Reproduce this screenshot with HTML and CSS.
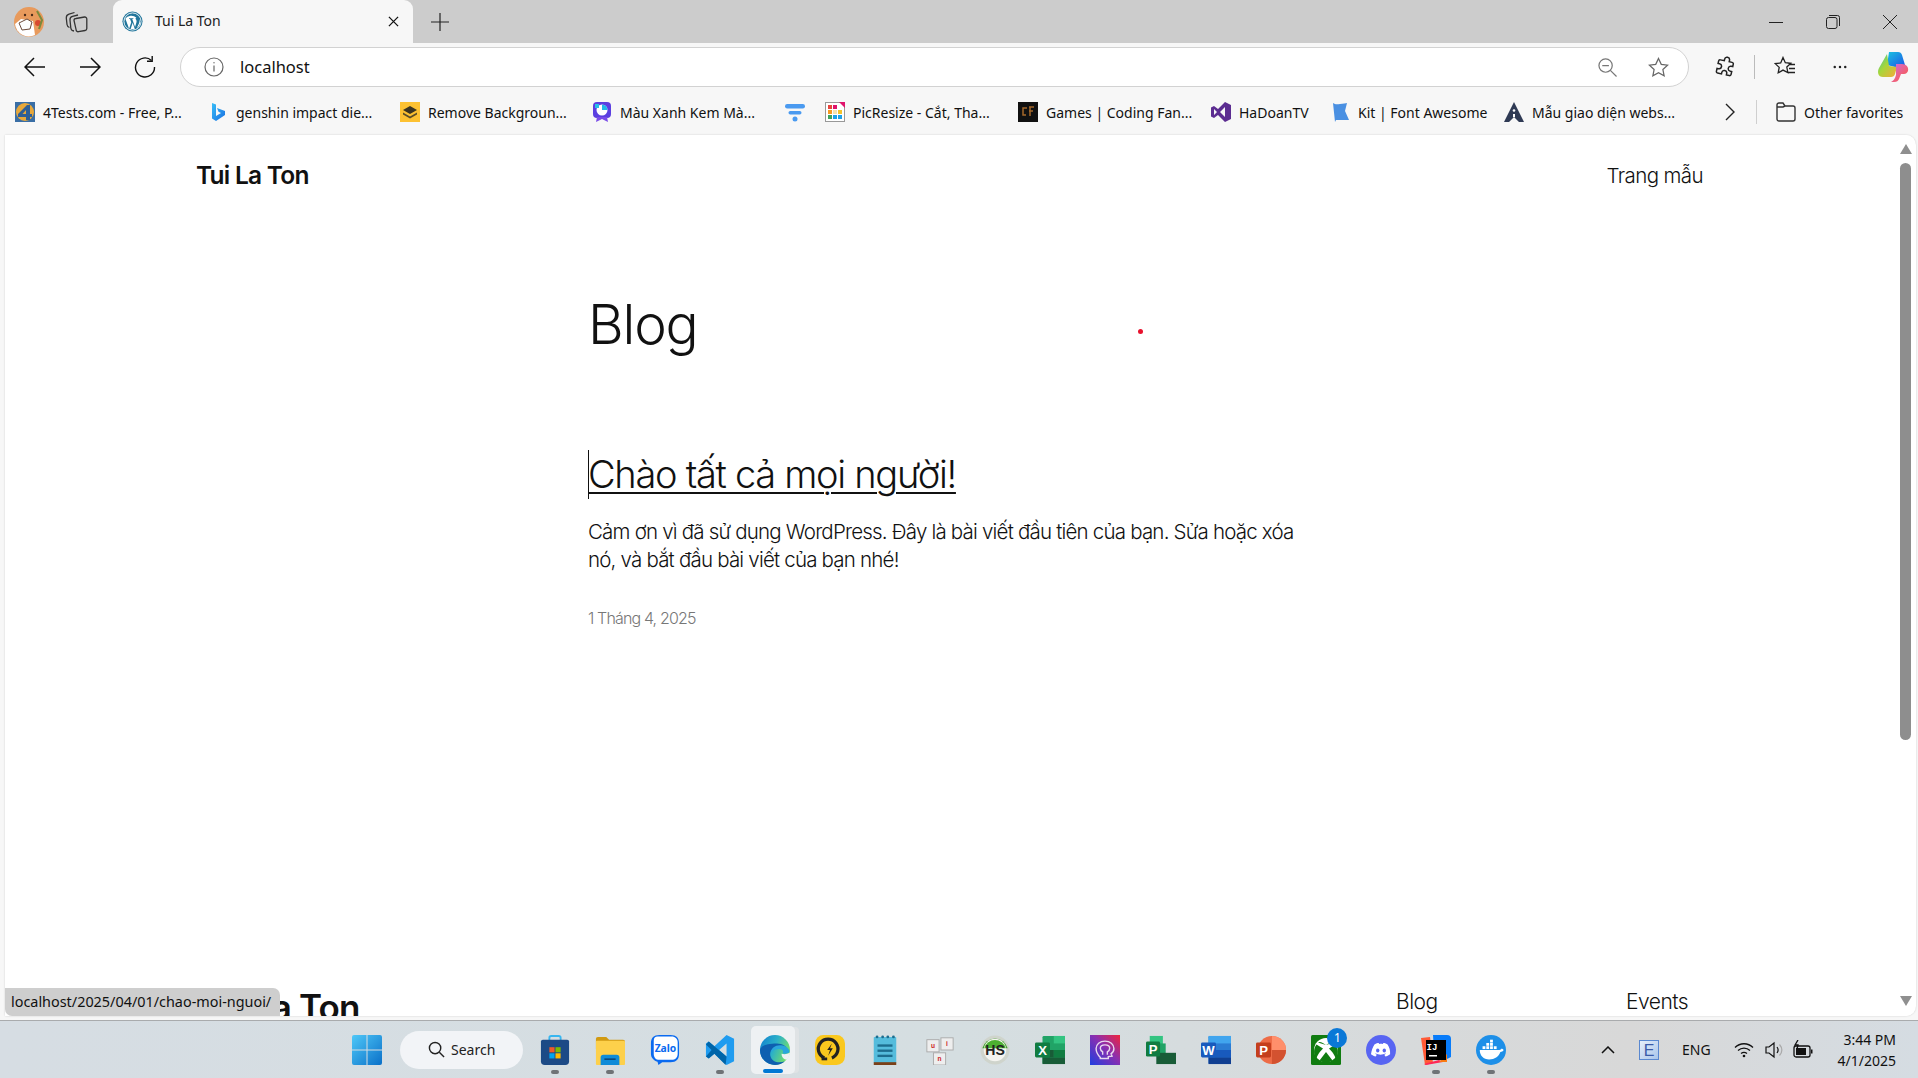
FILE: index.html
```html
<!DOCTYPE html>
<html lang="vi">
<head>
<meta charset="utf-8">
<title>Tui La Ton</title>
<link rel="stylesheet" href="styles.css">
</head>
<body>
<div class="tabstrip">
  <svg class="avatar" viewBox="0 0 32 32"><circle cx="16" cy="16" r="15" fill="#e89a5c"/><path d="M2 18a14 14 0 0 0 20 11l-2-14-12-2z" fill="#fff"/><path d="M6 17l8-4 5 3-2 7-8 1z" fill="#fdfdfd" stroke="#6b4a3a"/><circle cx="12" cy="9" r="1.2" fill="#4a2c1a"/><circle cx="19" cy="9" r="1.2" fill="#4a2c1a"/><circle cx="25" cy="17" r="3" fill="#d8492f"/><path d="M24 5l5 9-3 9" fill="none" stroke="#7a8a3c" stroke-width="2"/></svg>
  <svg class="tabs-icon" viewBox="0 0 24 24" fill="none" stroke="#333" stroke-width="1.300"><path d="M11 8.500l8.500-1.500a2 2 0 0 1 2.300 2v9.500a2 2 0 0 1-1.700 2l-6.600 1.200a2 2 0 0 1-2.400-2L9 10.500a2 2 0 0 1 2-2z"/><path d="M9 21c-2-.3-3-1.300-3.200-3L5 10c-.2-2 .7-3.200 2.500-3.700L13 5"/><path d="M4.500 17.500C3 17 2.200 16 2 14.500L1.300 8C1.200 6 2 4.800 4 4.200L9.500 2.500"/></svg>
  <div class="tab">
    <svg class="wp" viewBox="0 0 24 24"><circle cx="12" cy="12" r="11.500" fill="#21759b"/><circle cx="12" cy="12" r="9.800" fill="none" stroke="#fff" stroke-width="1"/><path d="M3.800 8.500l4.300 11.700 2.500-7.300-1.400-3.800-1.200-.1V8.300h5v.7l-1.300.1 3.200 9.300 1.500-5c.6-2 .2-3.100-.8-4.400-.3-.6.100-1.400 1-1.400a9 9 0 0 0-13.200 1.400z" fill="#fff"/><path d="M12.200 13.500l-2.300 7 4.700.1zM19.800 8.500c.6 2.300.2 4.200-.7 6.300l-2.300 5a9.500 9.500 0 0 0 3-11.300z" fill="#fff"/></svg>
    <span class="tab-title">Tui La Ton</span>
    <svg class="tab-x" viewBox="0 0 12 12" stroke="#111" stroke-width="1.400"><path d="M1 1l10 10M11 1L1 11"/></svg>
  </div>
  <svg class="plus" viewBox="0 0 18 18" stroke="#222" stroke-width="1.200"><path d="M9 0v18M0 9h18"/></svg>
  <div class="win-controls">
    <svg viewBox="0 0 14 14" stroke="#222" stroke-width="1"><path d="M0 7.500h14"/></svg>
    <svg viewBox="0 0 14 14" fill="none" stroke="#222" stroke-width="1"><rect x=".5" y="2.500" width="10.500" height="11" rx="2"/><path d="M3 .5h8.500a2 2 0 0 1 2 2V11"/></svg>
    <svg viewBox="0 0 14 14" stroke="#222" stroke-width="1"><path d="M0 0l14 14M14 0L0 14"/></svg>
  </div>
</div>

<div class="toolbar">
  <svg class="nav" viewBox="0 0 22 22" fill="none" stroke="#111" stroke-width="1.500"><path d="M21 11H1M10 2l-9 9 9 9"/></svg>
  <svg class="nav" viewBox="0 0 22 22" fill="none" stroke="#111" stroke-width="1.500"><path d="M1 11h20M12 2l9 9-9 9"/></svg>
  <svg class="nav reload" viewBox="0 0 22 22" fill="none" stroke="#111" stroke-width="1.400"><path d="M17.500 4.500A9.500 9.500 0 1 0 20.500 11"/><path d="M18.200 0v5.200H13"/></svg>
  <div class="address">
    <svg class="info" viewBox="0 0 20 20" fill="none" stroke="#666" stroke-width="1.200"><circle cx="10" cy="10" r="9"/><path d="M10 8.500v6"/><circle cx="10" cy="5.700" r=".7" fill="#666" stroke="none"/></svg>
    <span class="url">localhost</span>
    <svg class="addr-zoom" viewBox="0 0 20 20" fill="none" stroke="#777" stroke-width="1.300"><circle cx="8" cy="8" r="7"/><path d="M13 13l6.500 6.500M4.500 8h7"/></svg>
    <svg class="addr-star" viewBox="0 0 22 22" fill="none" stroke="#666" stroke-width="1.300"><path d="M11 1.500l2.900 6.200 6.600.8-4.900 4.600 1.300 6.700L11 16.500l-5.900 3.300 1.300-6.700L1.500 8.500l6.600-.8z"/></svg>
  </div>
  <svg class="tool ext" viewBox="0 0 22 22" fill="none" stroke="#222" stroke-width="1.500"><path d="M9 3.500a2.500 2.500 0 0 1 5 0V5h3a1.500 1.500 0 0 1 1.500 1.500V9H17a2.500 2.500 0 0 0 0 5h1.500v3a1.500 1.500 0 0 1-1.500 1.500h-3V17a2.500 2.500 0 0 0-5 0v1.500H5A1.500 1.500 0 0 1 3.500 17v-3H5a2.500 2.500 0 0 0 0-5H3.500V6.500A1.500 1.500 0 0 1 5 5h4z" transform="rotate(12 11 11)"/></svg>
  <span class="tool-sep"></span>
  <svg class="tool fav" viewBox="0 0 22 22" fill="none" stroke="#222" stroke-width="1.300"><path d="M9 1.500l2.300 5.200 5.500.6-4 3.800 1 5.400L9 14.100l-4.800 2.700 1-5.400-4-3.800 5.500-.6zM14.500 8.500h6.500M15 12.500h6M14 16.500h7"/></svg>
  <svg class="tool dots" viewBox="0 0 16 4" fill="#222"><circle cx="2" cy="2" r="1.400"/><circle cx="8" cy="2" r="1.400"/><circle cx="14" cy="2" r="1.400"/></svg>
  <svg class="copilot" viewBox="0 0 32 32">
    <defs>
      <linearGradient id="cp1" x1="0" y1="0" x2="1" y2="1"><stop offset="0" stop-color="#19c3e0"/><stop offset="1" stop-color="#1c55e8"/></linearGradient>
      <linearGradient id="cp2" x1="0" y1="0" x2="1" y2="1"><stop offset="0" stop-color="#3cc8a0"/><stop offset=".45" stop-color="#a8d63a"/><stop offset="1" stop-color="#f7a93a"/></linearGradient>
      <linearGradient id="cp3" x1="0" y1="0" x2="1" y2="1"><stop offset="0" stop-color="#c96be8"/><stop offset=".6" stop-color="#f0607a"/><stop offset="1" stop-color="#f44a3a"/></linearGradient>
    </defs>
    <path d="M12 1h9c2 0 3.500 1 4 3l3 10-10 2-8-2z" fill="url(#cp1)"/>
    <path d="M10 3L2 17c-2 4-1 9 4 9h8c2 0 3.500-1 4-3l2-7-8-1z" fill="url(#cp2)"/>
    <path d="M19 13h6c4 0 7 3 6 7-1 2-2 3-4 3h-3l-2 5c-1 2-2 3-5 3h-3c2-1 4-3 5-7z" fill="url(#cp3)"/>
  </svg>
</div>

<div class="bookmarks">
  <div class="bm"><svg class="bi" viewBox="0 0 20 20"><rect width="20" height="20" fill="#3a6ea5"/><circle cx="10" cy="10" r="9" fill="#e8a83a"/><path d="M12 3h3v9h2v3h-2v3h-4v-3H3v-3zM11 12V8l-3.500 4z" fill="#2f5f96"/></svg><span>4Tests.com - Free, P...</span></div>
  <div class="bm"><svg class="bi" viewBox="0 0 20 20"><defs><linearGradient id="bg" x1="0" y1="0" x2="1" y2="1"><stop offset="0" stop-color="#37bdf8"/><stop offset="1" stop-color="#1a6fe0"/></linearGradient></defs><path d="M4 1l4 1.500v11.500l5-3-2.500-1.200-1.500-3.800 8 3v4l-9 6-4-2.500z" fill="url(#bg)"/></svg><span>genshin impact die...</span></div>
  <div class="bm"><svg class="bi" viewBox="0 0 20 20"><rect width="20" height="20" fill="#fdc131"/><path d="M10 4l7 4-7 4-7-4z" fill="#3a3320"/><path d="M3 10.500l7 4 7-4v2l-7 4-7-4z" fill="#5a4d28"/></svg><span>Remove Backgroun...</span></div>
  <div class="bm"><svg class="bi" viewBox="0 0 20 20"><rect x="1" y="0" width="18" height="16" rx="4" fill="#5b3fe0"/><path d="M5 15l-1 5 6-3 6 3-1-5z" fill="#7a4be8"/><circle cx="10" cy="8" r="5.500" fill="#fff"/><path d="M10 8V2.500A5.500 5.500 0 0 1 15.500 8z" fill="#22b8e8"/><rect x="3" y="2" width="4" height="4" fill="#25c0e8"/></svg><span>Màu Xanh Kem Mà...</span></div>
  <div class="bm"><svg class="bi" viewBox="0 0 20 20" fill="#4a9af0"><rect y="2" width="20" height="4.500" rx="2.200"/><rect x="3.500" y="9" width="13" height="3.500" rx="1.700"/><circle cx="10" cy="17" r="2.500"/></svg></div>
  <div class="bm"><svg class="bi" viewBox="0 0 20 20"><rect x=".5" y=".5" width="19" height="19" fill="#fff" stroke="#999"/><path d="M14 0h6v6z" fill="#e0136c"/><rect x="3" y="3" width="4" height="4" fill="#e8453c"/><rect x="8" y="3" width="4" height="4" fill="#e0136c"/><rect x="3" y="8" width="4" height="4" fill="#f59a23"/><rect x="8" y="8" width="4" height="4" fill="#f5e2b0"/><rect x="13" y="8" width="4" height="4" fill="#f2c32c"/><rect x="3" y="13" width="4" height="4" fill="#3da35a"/><rect x="8" y="13" width="4" height="4" fill="#1da1e8"/><rect x="13" y="13" width="4" height="4" fill="#1da1e8"/></svg><span>PicResize - Cắt, Tha...</span></div>
  <div class="bm"><svg class="bi" viewBox="0 0 20 20"><rect width="20" height="20" fill="#111"/><path d="M9 6H5v7h3M11 5h5M11 9h4M12 5v9" fill="none" stroke="#a5682a" stroke-width="1.500"/></svg><span>Games | Coding Fan...</span></div>
  <div class="bm"><svg class="bi" viewBox="0 0 20 20" fill="#5c2d91"><path d="M14 0l6 3v14l-6 3-7-7-4 3-3-1.500v-9L3 4l4 3zM3 7v6l3-3zm11-2L9 10l5 5z" fill-rule="evenodd"/></svg><span>HaDoanTV</span></div>
  <div class="bm"><svg class="bi flag" viewBox="0 0 16 20" fill="#4a90e2"><path d="M0 1c2 1.500 4 1.500 7 1s6-.5 7-1l-2 8 4 9H3l-1 2z"/></svg><span>Kit | Font Awesome</span></div>
  <div class="bm"><svg class="bi" viewBox="0 0 20 20" fill="#2f3a54"><path d="M10 0L0 20h5l5-5 5 5h5z"/><circle cx="10" cy="8.500" r="1.300" fill="#fff"/><path d="M9 12h2v3H9z" fill="#fff"/></svg><span>Mẫu giao diện webs...</span></div>
  <svg class="bm-more" viewBox="0 0 10 18" fill="none" stroke="#222" stroke-width="1.400"><path d="M1 1l8 8-8 8"/></svg>
  <span class="bm-sep"></span>
  <div class="bm other"><svg class="bi" viewBox="0 0 20 20" fill="none" stroke="#333" stroke-width="1.400"><path d="M1 5V3a2 2 0 0 1 2-2h4l2 3h8a2 2 0 0 1 2 2v11a2 2 0 0 1-2 2H3a2 2 0 0 1-2-2zM1 5h6l2-1"/></svg><span>Other favorites</span></div>
</div>

<main class="viewport">
  <div class="page">
    <header class="site-head">
      <span class="brand">Tui La Ton</span>
      <span class="nav-link">Trang mẫu</span>
    </header>
    <article class="content">
      <h1 class="blog-title">Blog</h1>
      <h2 class="post-title"><span class="caret"></span>Chào tất cả mọi người!</h2>
      <p class="excerpt">Cảm ơn vì đã sử dụng WordPress. Đây là bài viết đầu tiên của bạn. Sửa hoặc xóa nó, và bắt đầu bài viết của bạn nhé!</p>
      <p class="date">1 Tháng 4, 2025</p>
    </article>
    <footer class="site-foot">
      <span class="foot-brand">Tui La Ton</span>
      <span class="foot-link first">Blog</span>
      <span class="foot-link">Events</span>
    </footer>
  </div>
  <div class="scrollbar">
    <span class="arrow up"></span>
    <span class="thumb"></span>
    <span class="arrow down"></span>
  </div>
  <span class="red-dot"></span>
  <div class="status">localhost/2025/04/01/chao-moi-nguoi/</div>
</main>

<div class="taskbar">
  <div class="apps">
    <svg class="winlogo" viewBox="0 0 30 30"><defs><linearGradient id="wl" x1="0" y1="0" x2="1" y2="1"><stop offset="0" stop-color="#4fc8f8"/><stop offset="1" stop-color="#0a70c8"/></linearGradient></defs><path d="M0 2a2 2 0 0 1 2-2h12.500v14.500H0zM15.500 0H28a2 2 0 0 1 2 2v12.500H15.500zM0 15.500h14.500V30H2a2 2 0 0 1-2-2zM15.500 15.500H30V28a2 2 0 0 1-2 2H15.500z" fill="url(#wl)"/></svg>
    <div class="search"><svg viewBox="0 0 18 18" fill="none" stroke="#222" stroke-width="1.500"><circle cx="7.500" cy="7.500" r="6"/><path d="M12 12l5 5"/></svg><span>Search</span></div>
    <div class="app run"><svg viewBox="0 0 30 32"><path d="M9 6V3a2 2 0 0 1 2-2h8a2 2 0 0 1 2 2v3" fill="none" stroke="#38b6f0" stroke-width="2"/><path d="M0 7a2 2 0 0 1 2-2h26a2 2 0 0 1 2 2v21a4 4 0 0 1-4 4H4a4 4 0 0 1-4-4z" fill="#1c4a86"/><rect x="9" y="13" width="5.500" height="5.500" fill="#f05a28"/><rect x="15.500" y="13" width="5.500" height="5.500" fill="#7fba00"/><rect x="9" y="19.500" width="5.500" height="5.500" fill="#00a4ef"/><rect x="15.500" y="19.500" width="5.500" height="5.500" fill="#ffb900"/></svg></div>
    <div class="app run"><svg viewBox="0 0 32 32"><path d="M1 4a2 2 0 0 1 2-2h9l3 3h15a2 2 0 0 1 2 2v8H1z" fill="#d19a12"/><rect x="1" y="6" width="31" height="26" rx="1" fill="#fdd04b"/><path d="M6 24a3 3 0 0 1 3-3h14a3 3 0 0 1 3 3v8H6z" fill="#0e8bd8"/><rect x="10" y="25" width="12" height="1.500" fill="#083e6e"/></svg></div>
    <div class="app"><svg viewBox="0 0 30 32"><path d="M9 0h12c6 0 9 3 9 9v11c0 6-3 9-9 9h-9l-4 3-1-3.500C2.500 27 0 24 0 20V9c0-6 3-9 9-9z" fill="#0a6af0"/><path d="M7 1.500h15c4 0 6.500 2.500 6.500 6.500v12c0 4-2.500 6.500-6.500 6.500H9C5 26.500 3 24 3 20V6c0-3 1.500-4.500 4-4.500z" fill="#fff"/><text x="15.500" y="18" class="zalo">Zalo</text></svg></div>
    <div class="app run"><svg viewBox="0 0 32 32"><path d="M23 0l8 4v24l-8 4-13-12-6 5-3-2V9l3-2 6 5zM23 9l-8 7 8 7z" fill="#1f9cf0" fill-rule="evenodd"/><path d="M1 10l3-3 19 16-1 9L10 20l-6 5-3-2 6-7z" fill="#0065a9"/></svg></div>
    <div class="app active"><svg viewBox="0 0 32 32"><defs><linearGradient id="eg" x1="0" y1="0" x2="1" y2=".4"><stop offset="0" stop-color="#0f7fd0"/><stop offset=".55" stop-color="#2bb0c8"/><stop offset="1" stop-color="#6fdc70"/></linearGradient></defs><circle cx="16" cy="16" r="16" fill="url(#eg)"/><path d="M0 16c0 9 7 16 16 16 4 0 8-1.500 10.500-4-7 2.500-14 .5-15.500-6-1-5 3-10 9-10 4 0 7 1.500 9 3-1-3-5-6-11-6C8 9 1 11 0 16z" fill="#0e5fb0"/><path d="M12 19c0-5 4-8 9-8 5 0 9 2 10.500 6 0 2.500-2.500 3-6 3-1.500 0-2-.5-1-1.500.5-1.500-1-3.500-4-3.500-3 0-7 1-8.500 4z" fill="#2aa6dc"/><path d="M23 20c3 1 6 .5 9-1-.5 3-1.500 5-3 7-3 1-6-2-6-6z" fill="#eef1f3"/></svg></div>
    <div class="app"><svg viewBox="0 0 32 32"><rect width="32" height="32" rx="9" fill="#fac81e"/><path d="M10 24.500a10.500 10.500 0 1 1 8 0" fill="none" stroke="#222" stroke-width="3.500"/><path d="M7 25.500h6" stroke="#222" stroke-width="3"/><path d="M18 9l-5 7h3l-2 6 5-8h-3z" fill="#222"/></svg></div>
    <div class="app"><svg viewBox="0 0 24 32"><rect x="0" y="2" width="24" height="28" rx="1" fill="#55bcdc"/><rect y="29" width="24" height="3" fill="#7a4018"/><g fill="#1d6d8e"><circle cx="3.500" cy="2" r="1.500"/><circle cx="9.500" cy="2" r="1.500"/><circle cx="15" cy="2" r="1.500"/><circle cx="21" cy="2" r="1.500"/><rect x="4" y="10" width="16" height="2.500"/><rect x="4" y="15.500" width="16" height="2.500"/><rect x="4" y="21" width="16" height="2.500"/></g></svg></div>
    <div class="app"><svg viewBox="0 0 32 32" font-size="7" class="uni"><rect x="2" y="5" width="13" height="13" fill="#eee" stroke="#aaa"/><rect x="17" y="3" width="13" height="13" fill="#eee" stroke="#aaa"/><rect x="9" y="19" width="13" height="13" fill="#eee" stroke="#aaa"/><text x="8.500" y="14" fill="#c22">u</text><text x="23.500" y="12" fill="#c22">i</text><text x="15.500" y="28" fill="#c22">n</text></svg></div>
    <div class="app"><svg viewBox="0 0 32 32"><circle cx="16" cy="16" r="15.500" fill="#cfd4cc"/><path d="M2.500 14a14 14 0 0 1 27 0z" fill="#3fa028"/><circle cx="16" cy="16" r="12" fill="#f4f4f0"/><path d="M4.500 14a12 12 0 0 1 23 0z" fill="#4cb030"/><text x="16" y="21.500" class="hs">HS</text></svg></div>
    <div class="app"><svg viewBox="0 0 32 32"><rect x="8" y="1" width="24" height="30" rx="1.500" fill="#21a366"/><rect x="20" y="1" width="12" height="8" fill="#33c481"/><rect x="20" y="16" width="12" height="8" fill="#107c41"/><rect x="8" y="16" width="12" height="8" fill="#185c37"/><rect x="8" y="24" width="24" height="7" fill="#185c37"/><rect x="0" y="8" width="16" height="16" rx="1.500" fill="#107c41"/><text x="8" y="21" class="office">X</text></svg></div>
    <div class="app"><svg viewBox="0 0 32 32"><defs><linearGradient id="ar" x1="0" y1="1" x2="1" y2="0"><stop offset="0" stop-color="#1f3ee0"/><stop offset=".55" stop-color="#8a2fb0"/><stop offset="1" stop-color="#f0243c"/></linearGradient></defs><rect width="32" height="32" fill="url(#ar)"/><path d="M11 24c-3-3-4.500-6-4.500-9.500C6.500 10 10.500 6.500 16 6.500s9.500 3.500 9.500 8c0 3-1 4.500-3 5.500l1 2.500-4 .5v2H11z" fill="none" stroke="#e8d8ee" stroke-width="1.500"/><path d="M13.500 21v-3c-2-1.500-2.500-3-2.500-4 0-2 2-3.500 5-3.500s5 1.500 5 3.500c0 1.500-1 3-2.500 4v3" fill="none" stroke="#e8d8ee" stroke-width="1.500"/></svg></div>
    <div class="app"><svg viewBox="0 0 32 32"><rect x="4" y="1" width="14" height="14" fill="#33c481"/><rect x="11" y="9" width="10" height="12" fill="#21a366"/><rect x="11" y="19" width="21" height="12" fill="#185c37"/><rect x="0" y="7" width="15" height="16" rx="1.500" fill="#107c41"/><text x="7.500" y="20" class="office">P</text></svg></div>
    <div class="app"><svg viewBox="0 0 32 32"><rect x="8" y="1" width="24" height="30" rx="1.500" fill="#2b7cd3"/><rect x="8" y="1" width="24" height="8" fill="#41a5ee"/><rect x="8" y="16" width="24" height="8" fill="#185abd"/><rect x="8" y="24" width="24" height="7" fill="#103f91"/><rect x="0" y="8" width="16" height="16" rx="1.500" fill="#185abd"/><text x="8" y="21" class="office">W</text></svg></div>
    <div class="app"><svg viewBox="0 0 32 32"><circle cx="17" cy="16" r="15" fill="#ed6c47"/><path d="M17 1a15 15 0 0 1 15 15H17z" fill="#ff8f6b"/><path d="M17 16h15a15 15 0 0 1-15 15z" fill="#d35230"/><rect x="0" y="8" width="16" height="16" rx="1.500" fill="#c43e1c"/><text x="8" y="21" class="office">P</text></svg></div>
    <div class="app badge-host"><svg viewBox="0 0 30 30"><rect width="30" height="30" rx="1.500" fill="#107c10"/><circle cx="15" cy="15" r="12" fill="#fff"/><path d="M15 10C13 8.500 10.500 7 8.500 7c-.5 0-1 .2-1.500.5zM5.500 9.500C2 14 2.500 20 5.500 24c0-3 3.500-7.500 6.500-10.500zM24.500 9.500C28 14 27.500 20 24.500 24c0-3-3.500-7.500-6.500-10.500zM15 17l-6.500 8.500c3.500 2.500 9.500 2.500 13 0z" fill="#107c10"/><path d="M15 10c2-1.500 4.500-3 6.500-3 .5 0 1 .2 1.500.5z" fill="#107c10"/></svg><span class="badge">1</span></div>
    <div class="app"><svg viewBox="0 0 32 32"><circle cx="16" cy="16" r="16" fill="#5865f2"/><path d="M9 10c2-1 3.500-1.300 4.500-1.400l.5 1c1.300-.2 2.700-.2 4 0l.5-1c1 .1 2.500.4 4.500 1.400 2 3 3 6.500 2.700 10.500-1.800 1.300-3.500 2-5 2.500l-1.200-2c.6-.2 1.200-.5 1.800-.9l-.4-.3c-3.500 1.600-7.300 1.600-10.800 0l-.4.3c.6.400 1.200.7 1.800.9l-1.200 2c-1.500-.5-3.200-1.200-5-2.500C6 16.500 7 13 9 10z" fill="#fff"/><ellipse cx="12.500" cy="16.500" rx="1.800" ry="2.100" fill="#5865f2"/><ellipse cx="19.500" cy="16.500" rx="1.800" ry="2.100" fill="#5865f2"/></svg></div>
    <div class="app run"><svg viewBox="0 0 30 30"><path d="M0 3l9-1 3 26-8 2z" fill="#ff5a36"/><path d="M3 29l15-4 4 2-17 3z" fill="#fe2857"/><path d="M12 0h14a4 4 0 0 1 4 4v18l-8 4-9-8z" fill="#087cfa"/><path d="M18 27h8v-8z" fill="#f97a12"/><rect x="5" y="5" width="20" height="20" fill="#000"/><text x="11" y="15" class="ij">IJ</text><rect x="8" y="20" width="8" height="1.500" fill="#fff"/></svg></div>
    <div class="app run"><svg viewBox="0 0 32 32"><circle cx="16" cy="16" r="16" fill="#1d8fe8"/><path d="M4 16h21c1 0 2-.5 2.500-1.500 1 .3 1.700 1 2 1.500-1 1.500-2 2-3.500 2-2 5-6 8-12 8-6 0-10-4-10-10z" fill="#fff"/><g fill="#fff"><rect x="7" y="12" width="3" height="3"/><rect x="11" y="12" width="3" height="3"/><rect x="15" y="12" width="3" height="3"/><rect x="19" y="12" width="3" height="3"/><rect x="11" y="8.500" width="3" height="3"/><rect x="15" y="8.500" width="3" height="3"/><rect x="15" y="5" width="3" height="3"/></g></svg></div>
  </div>
  <div class="tray">
    <svg class="t-chev" viewBox="0 0 14 8" fill="none" stroke="#111" stroke-width="1.500"><path d="M1 7l6-6 6 6"/></svg>
    <svg class="t-e" viewBox="0 0 20 20"><defs><linearGradient id="te" x1="0" y1="0" x2="1" y2="1"><stop offset="0" stop-color="#e8f0fa"/><stop offset="1" stop-color="#a8c4ea"/></linearGradient></defs><rect x=".5" y=".5" width="19" height="19" fill="url(#te)" stroke="#5a88d0"/><text x="10" y="16" class="e-glyph">E</text></svg>
    <span class="t-lang">ENG</span>
    <svg class="t-wifi" viewBox="0 0 20 16" fill="none" stroke="#111" stroke-width="1.300"><path d="M1 5.500c5-5 13-5 18 0M4 8.500c3.500-3.200 8.500-3.200 12 0M7 11.500c2-1.500 4-1.500 6 0"/><circle cx="10" cy="14" r="1.300" fill="#111" stroke="none"/></svg>
    <svg class="t-vol" viewBox="0 0 20 18" fill="none" stroke="#111" stroke-width="1.200"><path d="M1 6v6h3l5 4V2L4 6z"/><path d="M12 6c1.500 2 1.500 4 0 6"/><path d="M14.500 3.500c3 3.500 3 7.500 0 11" stroke="#aaa"/></svg>
    <svg class="t-bat" viewBox="0 0 20 20" fill="none" stroke="#111" stroke-width="1.300"><rect x="1" y="6" width="16" height="11" rx="2"/><rect x="3" y="8" width="10" height="7" fill="#111" stroke="none"/><rect x="18" y="9.500" width="1.500" height="4" fill="#111" stroke="none"/><path d="M5 0L2 5h3l-1 4" /></svg>
    <div class="t-clock"><span>3:44 PM</span><span>4/1/2025</span></div>
  </div>
</div>
</body>
</html>
```
FILE: styles.css
```css
* { box-sizing: border-box; }
html, body { margin: 0; height: 100%; overflow: hidden; }
body {
  width: 1918px;
  height: 1078px;
  display: flex;
  flex-direction: column;
  background: #f7f7f7;
  color: #111;
  font-family: "Noto Sans", "Open Sans", sans-serif;
}
svg { display: block; flex: none; }

.tabstrip { height: 43px; flex: none; background: #cccccc; display: flex; align-items: center; padding-left: 13px; }
.avatar { width: 32px; height: 32px; }
.tabs-icon { width: 24px; height: 24px; margin-left: 20px; }
.tab {
  width: 300px; height: 43px; margin-left: 24px; background: #f7f7f7;
  border-radius: 9px 9px 0 0; display: flex; align-items: center; padding: 0 13px 0 9px; position: relative;
}
.wp { width: 21px; height: 21px; }
.tab-title { margin-left: 12px; font-size: 14px; flex: 1; color: #222; line-height: 18px; padding-bottom: 1px; }
.tab-x { width: 11px; height: 11px; margin-right: 1px; }
.plus { width: 18px; height: 18px; margin-left: 18px; }
.win-controls { margin-left: auto; display: flex; gap: 43px; padding-right: 21px; }
.win-controls svg { width: 14px; height: 14px; }

.toolbar { height: 47px; flex: none; display: flex; align-items: center; padding: 1px 0 0 24px; }
.nav { width: 22px; height: 22px; margin-right: 33px; }
.nav.reload { margin-right: 24px; }
.address {
  width: 1509px; height: 40px; background: #fff; border: 1.500px solid #d2d2d2;
  border-radius: 20px; display: flex; align-items: center; padding-left: 23px;
}
.info { width: 20px; height: 20px; }
.url { margin-left: 16px; font-size: 16.500px; color: #111; flex: 1; line-height: 20px; }
.addr-zoom { width: 19px; height: 19px; }
.addr-star { width: 21px; height: 21px; margin: 0 19px 0 31px; }
.tool { width: 22px; height: 22px; }
.ext { margin-left: 25px; }
.tool-sep { width: 1px; height: 24px; background: #bbb; margin: 0 19px 0 18px; }
.dots { width: 14px; height: 4px; margin-left: 37px; }
.copilot { width: 32px; height: 32px; margin-left: 30px; }

.bookmarks {
  height: 44px; flex: none; display: grid; align-items: center;
  grid-template-columns: 193px 192px 192px 193px 40px 193px 193px 120px 173px 221px 31px 20px auto;
  padding-left: 15px; font-size: 14px; color: #111;
}
.bm { display: flex; align-items: center; gap: 8px; white-space: nowrap; }
.bi { width: 20px; height: 20px; }
.flag { width: 18px; height: 20px; margin-left: 1px; }
.bm-more { width: 10px; height: 18px; }
.bm-sep { width: 1px; height: 24px; background: #cfcfcf; }

.viewport {
  flex: 1; position: relative; margin: 1px 2px 4px 5px; background: #fff;
  border-radius: 0 10px 10px 0; display: flex; overflow: hidden;
  box-shadow: 0 0 2px rgba(0,0,0,.18);
}
.page { flex: 1; display: flex; flex-direction: column; font-family: Inter, "Noto Sans", sans-serif; font-weight: 300; color: #111; letter-spacing: -.5px; overflow: hidden; }
.site-head { display: flex; justify-content: space-between; align-items: center; padding: 21px 194px 0 191px; height: 59px; }
.brand { font-size: 24.500px; font-weight: 600; letter-spacing: -.75px; }
.nav-link { font-size: 20.500px; letter-spacing: -.6px; }
.content { width: 720px; margin-left: 583px; flex: 1; }
.blog-title { font-size: 55px; font-weight: 300; margin: 96px 0 0; line-height: 68px; letter-spacing: -1.200px; }
.post-title { font-size: 38px; font-weight: 300; margin: 92px 0 0; line-height: 48px; position: relative; letter-spacing: -1.300px; text-decoration: underline; text-decoration-thickness: 1.500px; text-underline-offset: 4px; display: table; }
.caret { position: absolute; left: 0; top: 0; width: 1px; height: 49px; background: #111; }
.excerpt { font-size: 20.500px; line-height: 28px; margin: 20px 0 0; letter-spacing: -.8px; width: 716px; }
.date { font-size: 16px; color: #777; margin: 32px 0 0; line-height: 24px; letter-spacing: -.85px; }
.site-foot { height: 50px; flex: none; display: flex; padding-left: 191px; align-items: flex-start; }
.foot-brand { font-size: 35px; font-weight: 600; line-height: 44px; padding-top: 19px; letter-spacing: -.8px; width: 1200px; }
.foot-link { font-size: 21px; width: 230px; line-height: 28px; padding-top: 22px; }

.scrollbar { width: 17px; flex: none; margin-right: 2px; display: flex; flex-direction: column; align-items: center; padding: 9px 0 10px; background: #fff; }
.arrow { width: 0; height: 0; border-left: 6.500px solid transparent; border-right: 6.500px solid transparent; flex: none; }
.up { border-bottom: 10px solid #8f8f8f; }
.down { border-top: 10px solid #8f8f8f; margin-top: auto; }
.thumb { width: 11px; height: 577px; background: #8e8e8e; border-radius: 6px; margin-top: 9px; }
.red-dot { position: absolute; left: 1133px; top: 194px; width: 5px; height: 5px; border-radius: 50%; background: #e8112d; }
.status {
  position: absolute; left: 0; bottom: 0; width: 275px; height: 28px; background: #cecece;
  border-radius: 0 7px 0 7px; font-size: 14.400px; line-height: 27px; padding-left: 6px; color: #111; white-space: nowrap;
}

.taskbar {
  height: 58px; flex: none; display: flex; align-items: center; border-top: 1px solid #a9abad;
  background: linear-gradient(90deg, #d6dde3 0%, #d5dee1 50%, #d8d8d8 85%, #d5dce2 100%);
  padding-left: 352px; position: relative;
}
.apps { display: flex; align-items: center; height: 100%; }
.winlogo { width: 30px; height: 30px; }
.search {
  width: 123px; height: 38px; margin: 0 4px 0 18px; border-radius: 19px; background: #f2f4f7; display: flex;
  align-items: center; gap: 6px; padding-left: 28px; font-size: 14px; color: #222;
}
.search svg { width: 17px; height: 17px; }
.app { width: 55.100px; height: 100%; display: flex; align-items: center; justify-content: center; position: relative; }
.app svg { width: 30px; height: 30px; }
.app.run::after, .app.active::after {
  content: ""; position: absolute; bottom: 4px; left: 50%; transform: translateX(-50%);
  width: 8px; height: 4px; border-radius: 2px; background: #6f7376;
}
.app.active {
  background: #eef1f3; border-radius: 5px; height: 48px; width: 44px; margin: 0 7.600px 0 3.500px;
  padding-left: 9px; justify-content: flex-start; box-shadow: 5px 0 0 -1px #dfe3e5;
}
.app.active::after { width: 20px; bottom: 1px; background: #0078d4; }
.badge-host .badge {
  position: absolute; left: 29px; top: 7px; width: 20px; height: 20px; border-radius: 50%;
  background: #0a78d7; color: #fff; font-size: 12px; line-height: 20px; text-align: center;
}
.zalo { font: 700 11px "Noto Sans", sans-serif; fill: #0a6af0; text-anchor: middle; }
.uni text { font-family: "Liberation Sans", sans-serif; font-weight: 700; text-anchor: middle; }
.hs { font: 700 15px "Liberation Sans", sans-serif; fill: #222; text-anchor: middle; }
.office { font: 700 14px "Liberation Sans", sans-serif; fill: #fff; text-anchor: middle; }
.ij { font: 700 9px "Liberation Mono", monospace; fill: #fff; text-anchor: middle; }
.e-glyph { font: 400 16px "Liberation Sans", sans-serif; fill: #3a5aa8; text-anchor: middle; }

.tray { margin-left: auto; display: flex; align-items: center; height: 100%; padding-right: 22px; }
.t-chev { width: 14px; height: 8px; }
.t-e { width: 20px; height: 20px; margin-left: 24px; }
.t-lang { font-size: 14px; margin-left: 23px; width: 30px; }
.t-wifi { width: 20px; height: 16px; margin-left: 22px; }
.t-vol { width: 20px; height: 18px; margin-left: 11px; }
.t-bat { width: 20px; height: 20px; margin-left: 8px; }
.t-clock { margin-left: 21px; width: 62px; display: flex; flex-direction: column; align-items: flex-end; font-size: 14px; line-height: 21px; color: #111; white-space: nowrap; }
```
